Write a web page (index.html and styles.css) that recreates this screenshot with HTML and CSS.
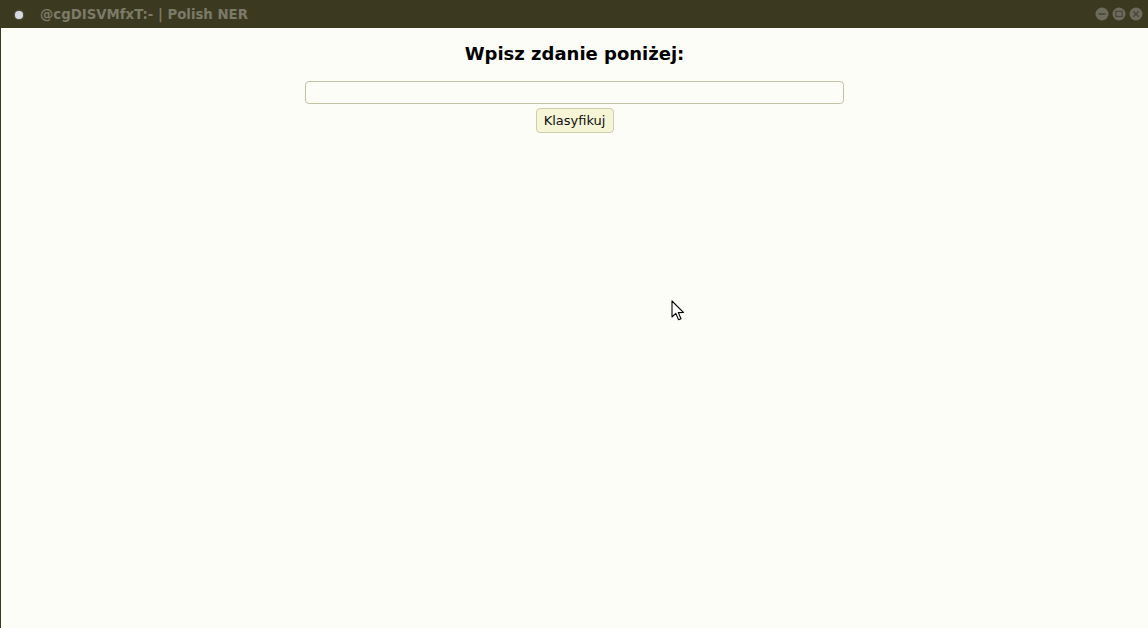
FILE: index.html
```html
<!DOCTYPE html>
<html lang="pl">
<head>
<meta charset="utf-8">
<title>Polish NER</title>
<link rel="stylesheet" href="styles.css">
</head>
<body>
<div class="window">
  <header class="titlebar">
    <span class="app-dot"></span>
    <span class="title">@cgDISVMfxT:- | Polish NER</span>
    <div class="controls">
      <span class="ctl"><svg width="14" height="14" viewBox="0 0 14 14"><circle cx="7" cy="7" r="6.5" fill="#6d6b5c"/><rect x="3.5" y="6.2" width="7" height="1.6" fill="#48473a"/></svg></span>
      <span class="ctl"><svg width="14" height="14" viewBox="0 0 14 14"><circle cx="7" cy="7" r="6.5" fill="#6d6b5c"/><rect x="3.8" y="4.3" width="6.4" height="5.2" fill="none" stroke="#48473a" stroke-width="1.2"/></svg></span>
      <span class="ctl"><svg width="14" height="14" viewBox="0 0 14 14"><circle cx="7" cy="7" r="6.5" fill="#6d6b5c"/><path d="M4.3 4.3 L9.7 9.7 M9.7 4.3 L4.3 9.7" stroke="#48473a" stroke-width="1.4"/></svg></span>
    </div>
  </header>
  <main class="content">
    <h1 class="heading">Wpisz zdanie poniżej:</h1>
    <form class="form">
      <input class="sentence" type="text">
      <button class="classify" type="button">Klasyfikuj</button>
    </form>
    <svg class="cursor" width="14" height="22" viewBox="0 0 14 22"><path d="M1 1 L1 17 L4.8 13.4 L7.6 19.8 L10 18.8 L7.3 12.6 L12.4 12.4 Z" fill="#ffffff" stroke="#000000" stroke-width="1.1" stroke-linejoin="round"/></svg>
  </main>
</div>
</body>
</html>
```

FILE: styles.css
```css
html, body {
  margin: 0;
  padding: 0;
  height: 100%;
}
body {
  font-family: "DejaVu Sans", sans-serif;
  background: #fdfdf8;
}
.window {
  display: flex;
  flex-direction: column;
  height: 628px;
  border-left: 1px solid #3b3a22;
  box-sizing: border-box;
}
.titlebar {
  height: 28px;
  flex: none;
  background: #3b3a20;
  display: flex;
  align-items: center;
  padding-left: 14px;
  padding-right: 5px;
}
.app-dot {
  width: 8px;
  height: 8px;
  border-radius: 50%;
  background: #d8d8e0;
  box-shadow: 0 0 2px #9a9aa8;
  margin-top: 1px;
}
.title {
  margin-left: 17px;
  font-weight: bold;
  font-size: 13.3px;
  color: #7c7a68;
}
.controls {
  margin-left: auto;
  display: flex;
  gap: 3px;
}
.ctl {
  display: block;
  width: 14px;
  height: 14px;
}
.ctl svg {
  display: block;
}
.content {
  flex: 1;
  position: relative;
  display: flex;
  flex-direction: column;
  align-items: center;
  background: #fdfdf8;
}
.heading {
  margin: 14px 0 0 0;
  font-size: 18px;
  font-weight: bold;
  line-height: 23px;
  color: #000;
}
.form {
  margin-top: 16px;
  display: flex;
  flex-direction: column;
  align-items: center;
}
.sentence {
  width: 539px;
  height: 23px;
  box-sizing: border-box;
  border: 1px solid #c4c3a6;
  border-radius: 4px;
  background: #fdfdf8;
  padding: 0 4px;
  font-family: "DejaVu Sans", sans-serif;
  font-size: 13px;
}
.classify {
  margin-top: 4px;
  width: 78px;
  height: 25px;
  box-sizing: border-box;
  border: 1px solid #cfcdb0;
  border-radius: 4px;
  background: #f6f5d6;
  font-family: "DejaVu Sans", sans-serif;
  font-size: 13px;
  color: #111;
  padding: 0;
}
.cursor {
  position: absolute;
  left: 670px;
  top: 272px;
}
```
